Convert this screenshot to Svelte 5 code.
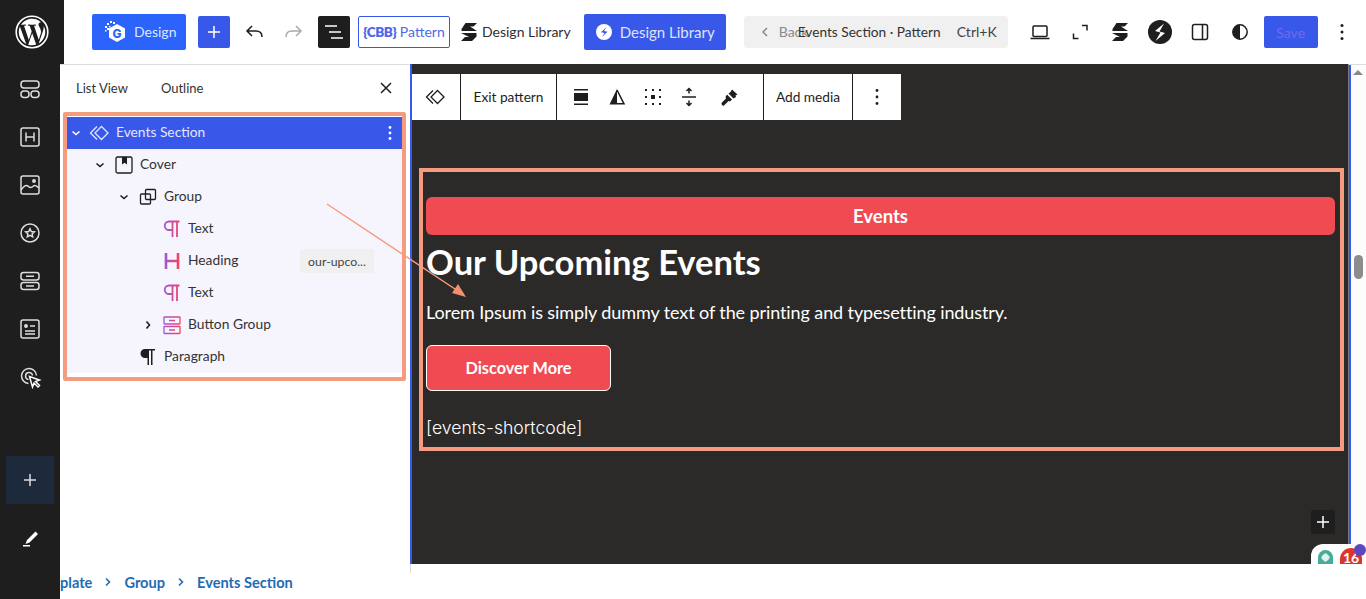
<script>
	const tree = [
		{ name: 'Events Section', level: 0, chev: 'down', icon: 'pattern', selected: true },
		{ name: 'Cover', level: 1, chev: 'down', icon: 'cover' },
		{ name: 'Group', level: 2, chev: 'down', icon: 'group' },
		{ name: 'Text', level: 3, icon: 'para-grad' },
		{ name: 'Heading', level: 3, icon: 'heading', tag: 'our-upco...' },
		{ name: 'Text', level: 3, icon: 'para-grad' },
		{ name: 'Button Group', level: 3, chev: 'right', icon: 'buttons' },
		{ name: 'Paragraph', level: 2, icon: 'para' }
	];
</script>

<div class="screen">
	<aside class="rail">
		<div class="logo">
			<svg width="34" height="34" viewBox="0 0 34 34">
				<circle cx="17" cy="17" r="15.8" fill="none" stroke="#fff" stroke-width="1.6" />
				<path fill="#fff" d="M3.8 17c0 5.2 3 9.7 7.400 11.900L4.900 11.600A13.200 13.200 0 0 0 3.800 17zm22.100-.7c0-1.600-.6-2.800-1.100-3.600-.7-1.100-1.300-2-1.300-3.100 0-1.200.9-2.400 2.300-2.400h.2A13.200 13.200 0 0 0 6 9.800h.9c1.400 0 3.500-.2 3.500-.2.700 0 .8 1 .1 1.100 0 0-.7.100-1.500.1l4.800 14.300 2.900-8.700-2-5.600c-.7 0-1.400-.1-1.400-.1-.7 0-.6-1.100.1-1.100 0 0 2.200.2 3.500.2 1.400 0 3.500-.2 3.500-.2.700 0 .8 1 .1 1.100 0 0-.7.100-1.500.1l4.800 14.200 1.300-4.400c.6-1.800 1-3.100 1-4.200zM17.200 18.200l-4 11.600a13.200 13.200 0 0 0 8.100-.2l-.1-.2-4-11.200zM28.600 10.700c.1.400.1.900.1 1.400 0 1.300-.3 2.800-1 4.700l-4 11.700a13.200 13.200 0 0 0 4.900-17.800z" />
			</svg>
		</div>
		<nav class="rail-icons">
			<svg width="24" height="24" viewBox="0 0 24 24" fill="none" stroke="#ddd" stroke-width="1.500"><rect x="3" y="4" width="18" height="7" rx="3" /><rect x="3" y="14" width="8" height="6.500" rx="3" /><rect x="13" y="14" width="8" height="6.500" rx="3" /></svg>
			<svg width="24" height="24" viewBox="0 0 24 24" fill="none" stroke="#ddd" stroke-width="1.500"><rect x="3" y="3" width="18" height="18" rx="2" /><path d="M8 7.500v9M16 7.500v9M8 12h8" /></svg>
			<svg width="24" height="24" viewBox="0 0 24 24" fill="none" stroke="#ddd" stroke-width="1.500"><rect x="3" y="3" width="18" height="18" rx="2" /><path d="M3 17c3-4 5-6 7.500-3.500 2 2 3.500 1 5-.5 2-1.500 3.500.5 5.500 2" /><circle cx="16" cy="8" r="1.200" fill="#ddd" /></svg>
			<svg width="24" height="24" viewBox="0 0 24 24" fill="none" stroke="#ddd" stroke-width="1.500"><circle cx="12" cy="12" r="9" /><path d="M12 7.800l1.300 2.800 3 .3-2.200 2 .6 3-2.700-1.500-2.700 1.500.6-3-2.200-2 3-.3z" /></svg>
			<svg width="24" height="24" viewBox="0 0 24 24" fill="none" stroke="#ddd" stroke-width="1.500"><rect x="3" y="3.500" width="18" height="7.500" rx="2.500" /><rect x="3" y="13.500" width="18" height="7" rx="2.500" /><path d="M8 7.200h8M8 17h8" /></svg>
			<svg width="24" height="24" viewBox="0 0 24 24" fill="none" stroke="#ddd" stroke-width="1.500"><rect x="3" y="3" width="18" height="18" rx="2" /><circle cx="8" cy="9" r="1.200" fill="#ddd" /><path d="M12 9h5M7 14h10M7 17h10" /></svg>
			<svg width="24" height="24" viewBox="0 0 24 24" fill="none" stroke="#ddd" stroke-width="1.500"><path d="M10.500 18.500a7.500 7.500 0 1 1 8-8" /><path d="M10.500 14.500a3.500 3.500 0 1 1 4-4" /><path fill="#1e1e1e" stroke="#fff" d="M11.500 11.500l10 3.500-4 1.500 4 4-1.500 1.500-4-4-1.500 4z" /></svg>
		</nav>
		<div class="rail-bottom">
			<div class="rail-add">
				<svg width="24" height="24" viewBox="0 0 24 24" fill="none" stroke="#ddd" stroke-width="1.500"><path d="M12 6v12M6 12h12" /></svg>
			</div>
			<div class="rail-pen">
				<svg width="24" height="24" viewBox="0 0 24 24" fill="#fff"><path d="M17.500 5.500l2.500 2.500-8.500 8.500-4 1.500 1.500-4zM5 19h7v1.500H5z" /></svg>
			</div>
		</div>
	</aside>

	<div class="main">
		<header class="topbar">
			<button class="btn-design">
				<svg width="24" height="26" viewBox="0 0 24 26">
					<path fill="#fff" d="M13 5l8 4.500v9L13 23l-8-4.500v-9z" />
					<path fill="#fff" d="M3 4h2v2H3zM6 2h2v2H6zM9 3h2v2H9zM1 7h2v2H1zM3 9h2v2H3zM1 11h1.500v1.500H1zM5 7h1.500v1.500H5z" />
					<text x="13" y="18.500" text-anchor="middle" font-size="12" font-weight="800" font-family="Inter" fill="#2b63fb">G</text>
				</svg>
				<span class="lbl">Design</span>
			</button>
			<button class="btn-square add">
				<svg width="24" height="24" viewBox="0 0 24 24" fill="none" stroke="#fff" stroke-width="1.500"><path d="M12 6v12M6 12h12" /></svg>
			</button>
			<span class="undo">
				<svg width="24" height="24" viewBox="0 0 24 24" fill="none" stroke="#1e1e1e" stroke-width="1.500"><path d="M20 17c0-4-2-6-6-6H5M10 6l-5 5 5 5" /></svg>
			</span>
			<span class="redo">
				<svg width="24" height="24" viewBox="0 0 24 24" fill="none" stroke="#aaa" stroke-width="1.500"><path d="M4 17c0-4 2-6 6-6h9M14 6l5 5-5 5" /></svg>
			</span>
			<button class="btn-square listview">
				<svg width="24" height="24" viewBox="0 0 24 24" fill="none" stroke="#fff" stroke-width="1.500"><path d="M3 6h12M7 12h12M9 18h12" /></svg>
			</button>
			<button class="btn-cbb"><b>&#123;CBB&#125;</b> Pattern</button>
			<span class="lib-plain">
				<svg width="18" height="18" viewBox="0 0 16 18" fill="#1e1e1e"><path d="M4.500 0H16l-3.500 3.500H9l7 4.500H.5V6zM0 10h15.500v3.500L11 18H0l4-4h4z" /></svg>
				<span class="lbl">Design Library</span>
			</span>
			<button class="btn-lib">
				<svg width="16" height="16" viewBox="0 0 16 16"><circle cx="8" cy="8" r="8" fill="#fff" /><path fill="#3858e9" d="M10.500 3L5 8.200l3.500.8L6 13l5.500-5.200-3.500-.8z" /></svg>
				<span class="lbl-low">Design Library</span>
			</button>
			<div class="command">
				<span class="back">
					<svg width="8" height="10" viewBox="0 0 8 10" fill="none" stroke="#888" stroke-width="1.500"><path d="M6 1L2 5l4 4" /></svg>
					<span class="lbl">Back</span>
				</span>
				<span class="doc-title">Events Section · Pattern</span>
				<span class="lbl">Ctrl+K</span>
			</div>
			<div class="tools">
				<svg width="24" height="24" viewBox="0 0 24 24" fill="none" stroke="#1e1e1e" stroke-width="1.500"><rect x="5" y="6" width="14" height="10.500" rx="1" /><path d="M2.500 18.500h19" /></svg>
				<svg width="24" height="24" viewBox="0 0 24 24" fill="none" stroke="#1e1e1e" stroke-width="1.500"><path d="M14 5.500h5v5M5.500 13.500v5h5" /></svg>
				<svg width="24" height="24" viewBox="-4 -3 24 24" fill="#1e1e1e"><path d="M4.500 0H16l-3.500 3.500H9l7 4.500H.5V6zM0 10h15.500v3.500L11 18H0l4-4h4z" /></svg>
				<svg width="24" height="24" viewBox="0 0 24 24"><circle cx="12" cy="12" r="12" fill="#1e1e1e" /><path fill="#fff" d="M16 3.500L7 11l5.500 1.500-5 8.500L17 13l-5.500-1.500z" /></svg>
				<svg width="24" height="24" viewBox="0 0 24 24" fill="none" stroke="#1e1e1e" stroke-width="1.500"><rect x="4.500" y="4.500" width="15" height="15" rx="2" /><path d="M14.500 4.500v15" /></svg>
				<svg width="24" height="24" viewBox="0 0 24 24"><circle cx="12" cy="12" r="7.200" fill="none" stroke="#1e1e1e" stroke-width="1.500" /><path fill="#1e1e1e" d="M12 4.800a7.200 7.200 0 0 0 0 14.400z" /></svg>
			</div>
			<button class="btn-save"><span class="lbl">Save</span></button>
			<span class="more">
				<svg width="24" height="24" viewBox="0 0 24 24" fill="#1e1e1e"><circle cx="12" cy="5.500" r="1.500" /><circle cx="12" cy="12" r="1.500" /><circle cx="12" cy="18.500" r="1.500" /></svg>
			</span>
		</header>

		<div class="work">
			<section class="panel">
				<div class="tabs">
					<span class="tab first">List View</span>
					<span class="tab">Outline</span>
					<svg class="close" width="24" height="24" viewBox="0 0 24 24" fill="none" stroke="#1e1e1e" stroke-width="1.500"><path d="M7 7l10 10M17 7L7 17" /></svg>
				</div>
				<div class="tree-frame">
					<ul class="tree">
						{#each tree as row}
							<li class="row" class:selected={row.selected} style="padding-left: {3 + 24 * row.level}px">
								<span class="chev">
									{#if row.chev === 'down'}
										<svg width="12" height="12" viewBox="0 0 12 12" fill="none" stroke="currentColor" stroke-width="1.600"><path d="M2.500 4.500L6 7.500l3.500-3" /></svg>
									{:else if row.chev === 'right'}
										<svg width="12" height="12" viewBox="0 0 12 12" fill="none" stroke="currentColor" stroke-width="1.600"><path d="M4.500 2.500L7.500 6l-3 3.500" /></svg>
									{/if}
								</span>
								<span class="ico">
									{#if row.icon === 'pattern'}
										<svg width="24" height="24" viewBox="0 0 24 24" fill="none" stroke="currentColor" stroke-width="1.300"><path d="M13.500 5.500L20 12l-6.500 6.500L7 12z" /><path d="M9 5.500L2.500 12 9 18.500" /></svg>
									{:else if row.icon === 'cover'}
										<svg width="20" height="20" viewBox="0 0 20 20" fill="none" stroke="#1e1e1e" stroke-width="1.300"><rect x="2" y="2" width="16" height="16" rx="1.500" /><path fill="#1e1e1e" stroke="none" d="M8 2h5v7.500l-2.500-1.800L8 9.500z" /></svg>
									{:else if row.icon === 'group'}
										<svg width="18" height="18" viewBox="0 0 18 18" fill="none" stroke="#1e1e1e" stroke-width="1.300"><rect x="1.500" y="6" width="10" height="10" rx="1" /><rect x="6.500" y="1.500" width="10" height="10" rx="1" /></svg>
									{:else if row.icon === 'para-grad'}
										<svg width="18" height="18" viewBox="0 0 18 18" fill="none" stroke="url(#grad)" stroke-width="1.800"><path d="M16.500 1.500H6a4 4 0 0 0 0 8.500h2.500M9.500 1.500v15.500M14 1.500v15.500" /></svg>
									{:else if row.icon === 'heading'}
										<svg width="16" height="20" viewBox="0 0 16 20" fill="none" stroke="url(#grad)" stroke-width="2.600"><path d="M2 2v16M14 2v16M2 10h12" /></svg>
									{:else if row.icon === 'buttons'}
										<svg width="18" height="20" viewBox="0 0 18 20" fill="none" stroke="url(#grad)" stroke-width="1.300"><rect x="1" y="2" width="16" height="7" rx=".5" /><rect x="1" y="11.500" width="16" height="7" rx=".5" /><path d="M6 5.500h6M6 15h6" /></svg>
									{:else}
										<svg width="18" height="18" viewBox="0 0 18 18" fill="#1e1e1e"><path d="M16 1H6a4.500 4.500 0 0 0 0 9h2.500v7H10V2.500h2V17h1.500V2.500H16z" /></svg>
									{/if}
								</span>
								<span class="row-name">{row.name}</span>
								{#if row.tag}<span class="tag">{row.tag}</span>{/if}
								{#if row.selected}
									<svg class="row-more" width="24" height="24" viewBox="0 0 24 24" fill="#fff"><circle cx="12" cy="6.500" r="1.400" /><circle cx="12" cy="12" r="1.400" /><circle cx="12" cy="17.500" r="1.400" /></svg>
								{/if}
							</li>
						{/each}
					</ul>
				</div>
			</section>

			<section class="canvas">
				<div class="block-toolbar">
					<span class="tb-group icon-only">
						<svg width="24" height="24" viewBox="0 0 24 24" fill="none" stroke="#1e1e1e" stroke-width="1.300"><path d="M13.500 5.500L20 12l-6.500 6.500L7 12z" /><path d="M9 5.500L2.500 12 9 18.500" /></svg>
					</span>
					<span class="tb-group exit">Exit pattern</span>
					<span class="tb-group tb-tools">
						<svg width="24" height="24" viewBox="0 0 24 24" fill="#1e1e1e"><path d="M5 4h14v1.500H5zM5 8h14v8H5zM5 18.500h14V20H5z" /></svg>
						<svg width="24" height="24" viewBox="0 0 24 24"><path d="M12 4L4.500 19.500H12z" fill="#1e1e1e" /><path d="M12 5l7 13.800h-7" fill="none" stroke="#1e1e1e" stroke-width="1.500" /></svg>
						<svg width="24" height="24" viewBox="0 0 24 24" fill="#1e1e1e"><rect x="10" y="10" width="4" height="4" /><path d="M4 4h2v2H4zM11 4h2v2h-2zM18 4h2v2h-2zM4 11h2v2H4zM18 11h2v2h-2zM4 18h2v2H4zM11 18h2v2h-2zM18 18h2v2h-2z" /></svg>
						<svg width="24" height="24" viewBox="0 0 24 24" fill="none" stroke="#1e1e1e" stroke-width="1.500"><path d="M5 12h14M12 3.500v5M9.500 6L12 3.500 14.500 6M12 20.500v-5M9.500 18l2.500 2.500 2.500-2.500" /></svg>
						<svg width="24" height="24" viewBox="0 0 24 24" fill="#1e1e1e"><path d="M14 4.500l5.500 5-2 1 .5 1.500-2.500 1.500-5-5 2-1.500zM9 9.500l5 5-2 2-1.500-.5-4 4a1.600 1.600 0 0 1-2.500-2.500l4-4-.5-1.500z" /></svg>
					</span>
					<span class="tb-group media"><span class="lbl">Add media</span></span>
					<span class="tb-group dots">
						<svg width="24" height="24" viewBox="0 0 24 24" fill="#1e1e1e"><circle cx="12" cy="5.500" r="1.400" /><circle cx="12" cy="12" r="1.400" /><circle cx="12" cy="18.500" r="1.400" /></svg>
					</span>
				</div>

				<div class="frame">
					<div class="events-pill">Events</div>
					<h2>Our Upcoming Events</h2>
					<p class="lede">Lorem Ipsum is simply dummy text of the printing and typesetting industry.</p>
					<a class="discover" href="#top"><span class="lbl">Discover More</span></a>
					<p class="shortcode">[events-shortcode]</p>
				</div>

				<button class="float-add">
					<svg width="20" height="20" viewBox="0 0 20 20" fill="none" stroke="#fff" stroke-width="1.500"><path d="M10 4v12M4 10h12" /></svg>
				</button>
				<div class="badge">
					<span class="badge-teal"><i></i></span>
					<span class="badge-red">16</span>
					<span class="badge-dot"></span>
				</div>
			</section>

			<div class="scroller">
				<span class="arrow-up"></span>
				<span class="thumb"></span>
			</div>
		</div>

		<footer class="crumbs">
			<span class="crumb-cut">Template</span>
			<svg width="10" height="10" viewBox="0 0 10 10" fill="none" stroke="#1e6cb3" stroke-width="1.600"><path d="M3 1.500L6.500 5 3 8.500" /></svg>
			<span>Group</span>
			<svg width="10" height="10" viewBox="0 0 10 10" fill="none" stroke="#1e6cb3" stroke-width="1.600"><path d="M3 1.500L6.500 5 3 8.500" /></svg>
			<span>Events Section</span>
		</footer>
	</div>

	<!-- annotation arrow drawn over the screenshot -->
	<svg class="annot" width="1366" height="599" viewBox="0 0 1366 599">
		<defs>
			<linearGradient id="grad" x1="0" y1="0" x2="1" y2="0">
				<stop offset="0" stop-color="#a356d2" />
				<stop offset="1" stop-color="#ee4468" />
			</linearGradient>
		</defs>
		<path d="M327 204L458 291" stroke="#f59b7f" stroke-width="1.500" fill="none" />
		<path d="M466 297L452 293 458 284z" fill="#f0906f" />
	</svg>
</div>

<style>
	:global(body) {
		background: #fff;
		font-family: 'Lato', 'Noto Sans', sans-serif;
		color: #1e1e1e;
		overflow: hidden;
	}

	* { box-sizing: border-box; }
	button { border: 0; font: inherit; padding: 0; cursor: pointer; }

	.screen {
		position: relative;
		display: flex;
		width: 1366px;
		height: 599px;
		overflow: hidden;
	}

	/* ── left rail ── */
	.rail {
		flex: 0 0 60px;
		position: relative;
		z-index: 2;
		display: flex;
		flex-direction: column;
		align-items: center;
		background: #1e1e1e;
	}
	.logo {
		align-self: flex-start;
		width: 64px;
		height: 64px;
		margin-right: -4px;
		flex: none;
		display: flex;
		align-items: center;
		justify-content: center;
		background: #1e1e1e;
	}
	.rail-icons {
		display: flex;
		flex-direction: column;
		gap: 24px;
		margin-top: 13px;
	}
	.rail-icons svg { display: block; }
	.rail-bottom {
		margin-top: 67px;
		display: flex;
		flex-direction: column;
		align-items: center;
	}
	.rail-add {
		width: 48px;
		height: 48px;
		background: #1c2a3c;
		display: flex;
		align-items: center;
		justify-content: center;
	}
	.rail-pen { margin-top: 22px; height: 24px; }

	/* ── main column ── */
	.main {
		flex: 1;
		min-width: 0;
		display: flex;
		flex-direction: column;
	}

	.topbar {
		flex: 0 0 64px;
		display: flex;
		align-items: center;
		padding-left: 32px;
		background: #fff;
		font-size: 14px;
	}
	.lbl { margin-bottom: 2px; }
	.lbl-low { margin-bottom: 1px; }
	.btn-design {
		width: 94px;
		height: 36px;
		display: flex;
		align-items: center;
		gap: 6px;
		padding-left: 12px;
		background: #2b63fb;
		color: #dfe6ff;
		border-radius: 2px;
	}
	.btn-square {
		width: 32px;
		height: 32px;
		display: flex;
		align-items: center;
		justify-content: center;
		border-radius: 2px;
	}
	.add { margin-left: 12px; background: #3858e9; }
	.undo { margin-left: 12px; height: 24px; }
	.redo { margin-left: 16px; height: 24px; }
	.listview { margin-left: 12px; background: #1e1e1e; }
	.btn-cbb {
		margin-left: 8px;
		width: 92px;
		height: 32px;
		background: #fff;
		border: 1px solid #3858e9;
		border-radius: 2px;
		color: #4f67e8;
		font-size: 14px;
		white-space: nowrap;
		padding-bottom: 2px;
	}
	.btn-cbb b { font-weight: 800; font-size: 13.500px; letter-spacing: -.4px; }
	.lib-plain {
		margin-left: 10px;
		display: flex;
		align-items: center;
		gap: 4px;
		white-space: nowrap;
		color: #2f2f2f;
	}
	.btn-lib {
		margin-left: 13px;
		width: 142px;
		height: 36px;
		display: flex;
		align-items: center;
		gap: 8px;
		padding-left: 12px;
		background: #3858e9;
		color: #dfe2fb;
		font-size: 15px;
		border-radius: 2px;
		white-space: nowrap;
	}
	.command {
		position: relative;
		margin-left: 18px;
		width: 264px;
		height: 32px;
		display: flex;
		align-items: center;
		justify-content: space-between;
		padding: 0 11px 0 17px;
		background: #f0f0f0;
		border-radius: 4px;
		color: #444;
	}
	.back { display: flex; align-items: center; gap: 10px; color: #8a8a8a; }
	.doc-title {
		/* overlaps the back link like it does in the editor */
		position: absolute;
		left: 54px;
		top: 7px;
		font-size: 13.700px;
		color: #333;
	}
	.tools {
		margin-left: 20px;
		display: flex;
		gap: 16px;
	}
	.btn-save {
		margin-left: 12px;
		width: 54px;
		height: 32px;
		background: #3858e9;
		color: #6f6bea;
		border-radius: 2px;
	}
	.more { margin-left: 12px; height: 24px; }

	.work { flex: 1; min-height: 0; display: flex; }

	/* ── list view panel ── */
	.panel {
		flex: 0 0 352px;
		background: #fff;
		border-top: 1px solid #ddd;
		height: 509px;
		position: relative;
		z-index: 1;
	}
	.panel::before {
		content: '';
		position: absolute;
		right: 1px;
		top: 0;
		bottom: 0;
		width: 1px;
		background: #ddd;
	}
	.panel::after {
		content: '';
		position: absolute;
		right: 0;
		top: -1px;
		width: 2px;
		height: 500px;
		background: #3858e9;
	}
	.tabs {
		height: 47px;
		display: flex;
		align-items: center;
		padding: 0 0 2px 16px;
		font-size: 13px;
		color: #333;
		position: relative;
	}
	.tab.first { margin-right: 33px; }
	.close { position: absolute; right: 14px; top: 11px; }
	.tree-frame {
		margin-left: 3px;
		width: 343px;
		height: 269px;
		border: 4px solid #f59b7f;
		border-radius: 2px;
		background: #fff;
		padding-top: 1px;
	}
	.tree {
		list-style: none;
		margin: 0;
		padding: 0;
		background: #f6f5fe;
		height: 256px;
		width: 335px;
	}
	.row {
		height: 32px;
		display: flex;
		align-items: center;
		font-size: 13.800px;
		color: #333;
		position: relative;
	}
	.row.selected { background: #3858e9; color: #e4e6fb; }
	.chev { flex: 0 0 12px; height: 12px; margin-right: 6px; display: flex; color: #1e1e1e; }
	.selected .chev { color: #fff; }
	.ico { flex: 0 0 24px; height: 24px; margin-right: 4px; display: flex; align-items: center; justify-content: center; }
	.row-name { white-space: nowrap; margin-bottom: 4px; }
	.tag {
		position: absolute;
		left: 233px;
		width: 74px;
		height: 24px;
		display: flex;
		align-items: center;
		justify-content: center;
		background: #f0f0f0;
		border-radius: 2px;
		font-size: 12.300px;
		color: #444;
	}
	.row-more { position: absolute; right: 0; top: 4px; }

	/* ── canvas ── */
	.canvas {
		position: relative;
		z-index: 1;
		flex: 0 0 936px;
		height: 500px;
		padding: 10px 0 0 0;
		background: #2b2a29;
		color: #fff;
		font-family: 'Lato', sans-serif;
	}
	.block-toolbar {
		display: flex;
		height: 46px;
		width: 489px;
		background: #fff;
		color: #1e1e1e;
		font-size: 13.700px;
		font-family: 'Lato', sans-serif;
	}
	.tb-group {
		display: flex;
		align-items: center;
		justify-content: center;
		border-right: 1px solid #1e1e1e;
		white-space: nowrap;
	}
	.icon-only { width: 49px; }
	.exit { width: 96px; padding-bottom: 2px; }
	.tb-tools { width: 207px; gap: 12px; justify-content: flex-start; padding-left: 12px; }
	.tb-tools svg:last-child { margin-left: 5px; }
	.media { width: 89px; }
	.dots { flex: 1; border-right: 0; }

	.frame {
		margin: 48px 0 0 7px;
		width: 925px;
		height: 283px;
		border: 4px solid #f59b7f;
		padding: 25px 5px 0 3px;
	}
	.events-pill {
		height: 38px;
		line-height: 38px;
		text-align: center;
		background: #f04a52;
		border-radius: 6px;
		font-size: 18.500px;
		font-weight: 700;
	}
	h2 {
		margin: 3px 0 0;
		font-size: 34.500px;
		line-height: 48px;
		font-weight: 700;
	}
	.lede {
		margin: 12px 0 0;
		font-size: 18px;
		letter-spacing: -.1px;
		line-height: 28px;
	}
	.discover {
		display: flex;
		align-items: center;
		justify-content: center;
		margin-top: 19px;
		width: 185px;
		height: 46px;
		background: #f04a52;
		border: 1px solid #fff;
		border-radius: 6px;
		color: #fff;
		font-size: 16.300px;
		font-weight: 700;
		text-decoration: none;
	}
	.shortcode {
		margin: 24px 0 0;
		font-family: 'Inter', sans-serif;
		font-size: 17.600px;
		line-height: 26px;
		font-weight: 300;
		color: #fff;
	}
	.float-add {
		position: absolute;
		left: 899px;
		top: 446px;
		width: 24px;
		height: 24px;
		display: flex;
		align-items: center;
		justify-content: center;
		background: #1e1e1e;
		border-radius: 2px;
	}
	.badge {
		position: absolute;
		bottom: 0;
		left: 899px;
		width: 55px;
		height: 20px;
		background: #fff;
		border-radius: 12px 0 0 0;
	}
	.badge-teal {
		position: absolute;
		left: 7px;
		top: 6px;
		width: 15px;
		height: 14px;
		border-radius: 8px 8px 0 0;
		background: #46ab98;
		display: flex;
		justify-content: center;
		padding-top: 4px;
	}
	.badge-teal i { width: 7px; height: 7px; background: #dff3ee; transform: rotate(45deg); border-radius: 2px; }
	.badge-red {
		position: absolute;
		left: 29px;
		top: 4px;
		width: 22px;
		height: 16px;
		overflow: hidden;
		border-radius: 11px 11px 0 0;
		background: #d9372c;
		color: #fff;
		font: 700 14px/20px 'Lato', sans-serif;
		text-align: center;
	}
	.badge-dot {
		position: absolute;
		left: 43px;
		top: 0;
		width: 12px;
		height: 12px;
		border-radius: 50%;
		background: #5b47c0;
	}

	.scroller {
		flex: 1;
		height: 500px;
		position: relative;
		background: #fcfcfc;
		border-left: 1px solid #777;
		border-top: 1px solid #ddd;
		box-shadow: inset 2px 0 0 #3858e9;
	}
	.arrow-up {
		position: absolute;
		left: 4px;
		top: 5px;
		border: 5px solid transparent;
		border-top: 0;
		border-bottom: 5px solid #888;
	}
	.thumb {
		position: absolute;
		left: 5px;
		top: 190px;
		width: 9px;
		height: 24px;
		background: #8c8c8c;
		border-radius: 5px;
	}

	/* ── breadcrumb ── */
	.crumbs {
		flex: 0 0 35px;
		display: flex;
		align-items: center;
		gap: 11px;
		padding-top: 1px;
		background: #fff;
		color: #1e6cb3;
		font-size: 14.600px;
		font-weight: 700;
		white-space: nowrap;
		overflow: hidden;
	}
	.crumb-cut { margin-left: -27px; }

	.annot { position: absolute; inset: 0; z-index: 3; pointer-events: none; }
</style>
